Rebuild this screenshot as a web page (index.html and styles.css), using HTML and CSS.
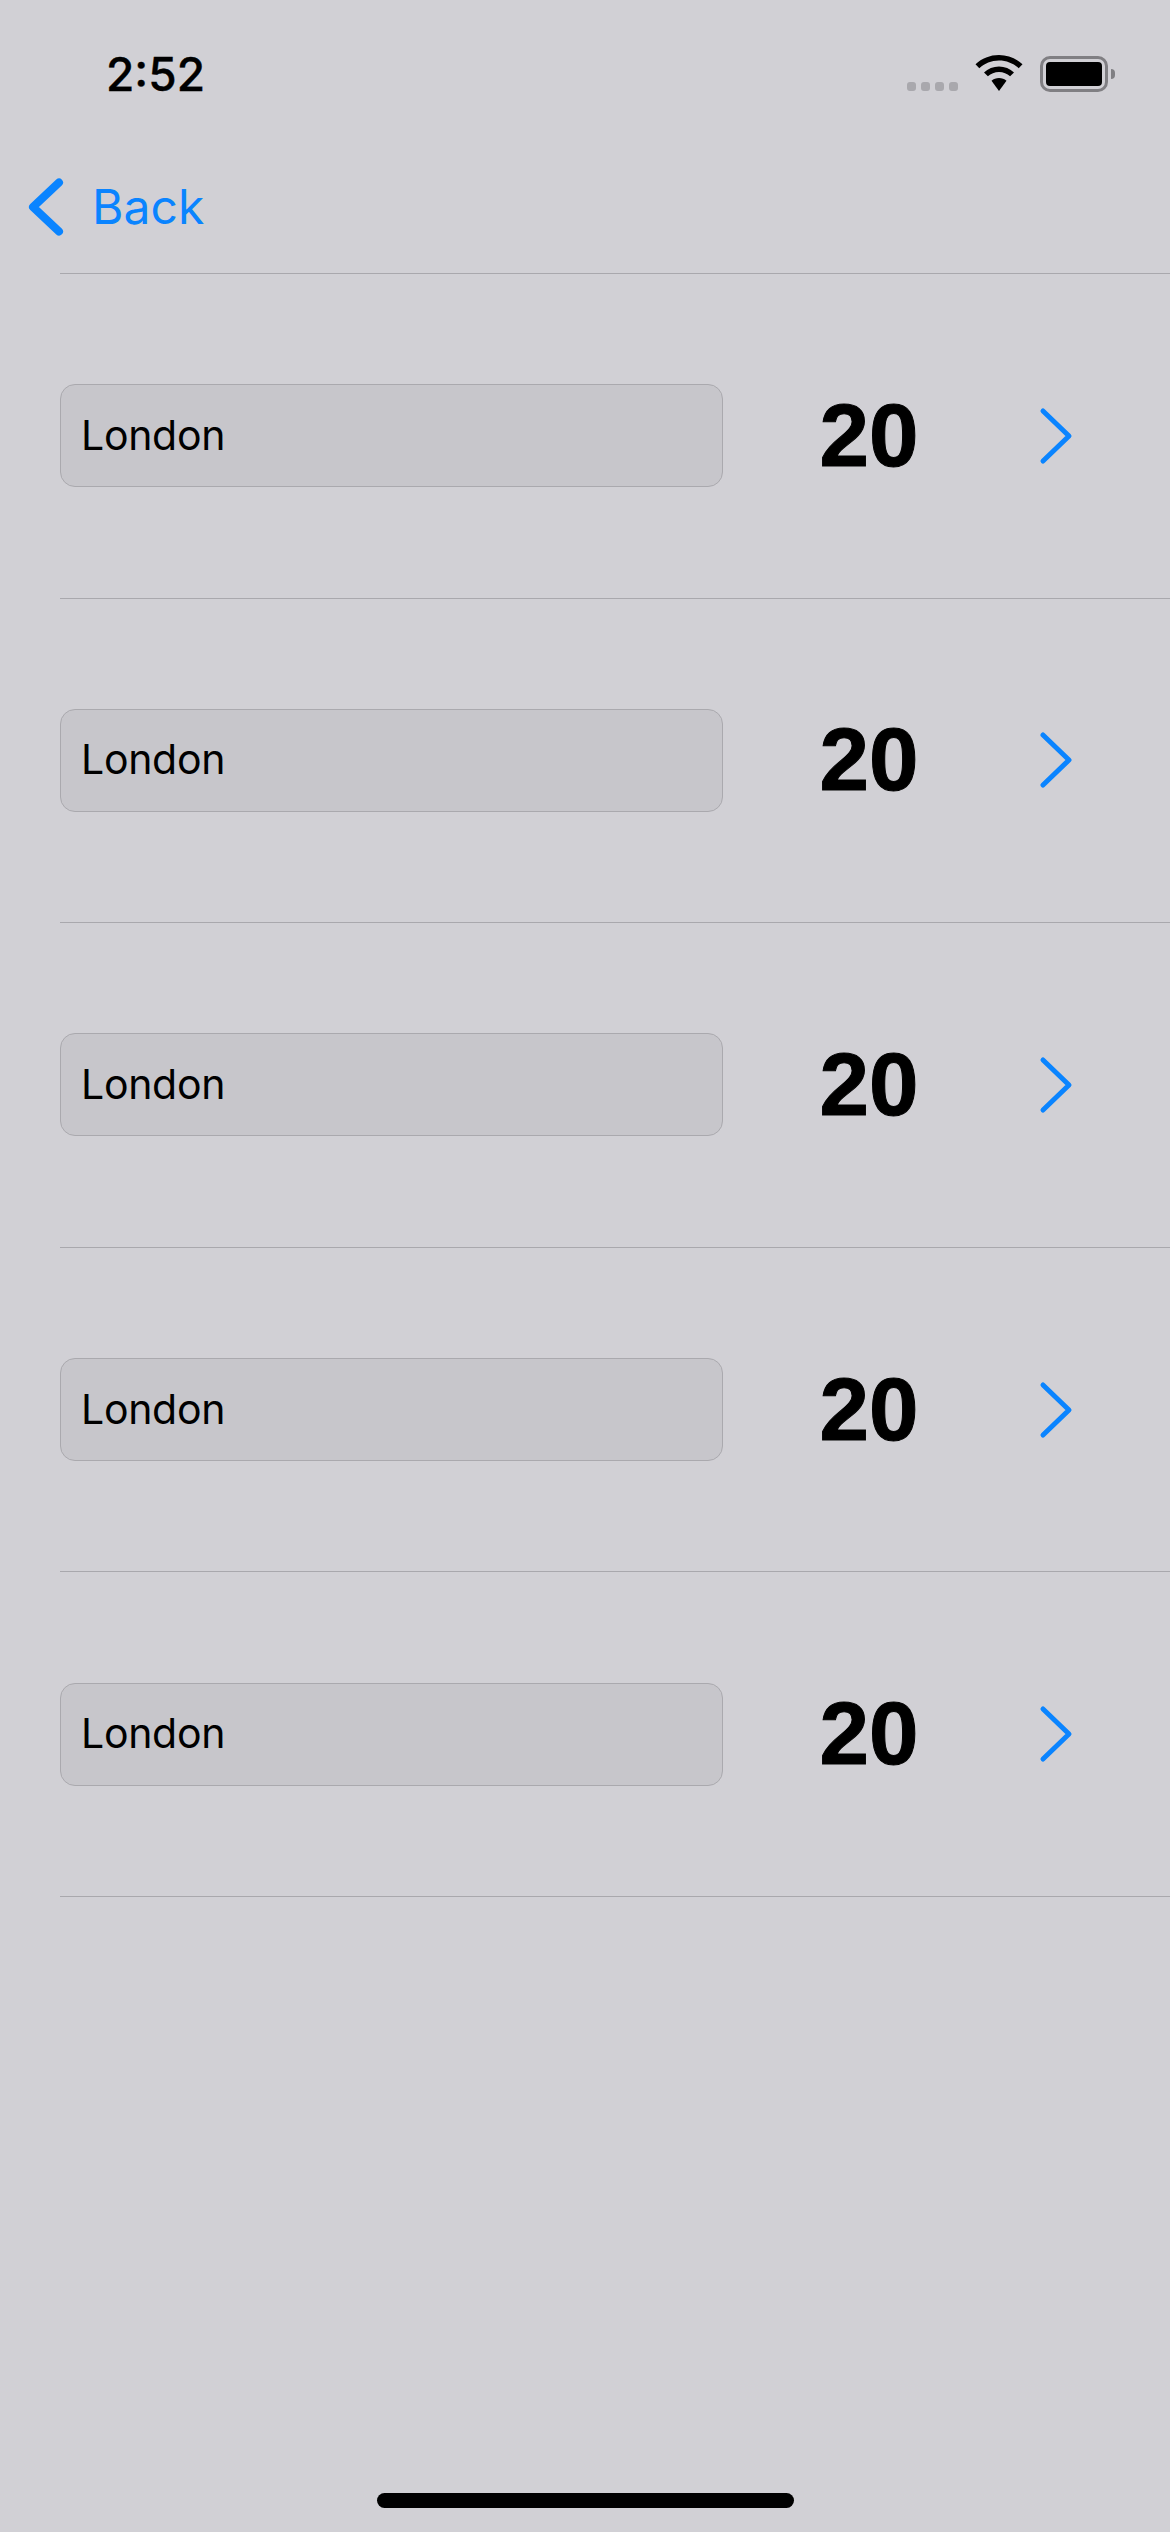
FILE: index.html
```html
<!DOCTYPE html>
<html lang="en">
<head>
<meta charset="utf-8">
<title>Cities</title>
<link rel="stylesheet" href="styles.css">
</head>
<body>
<div class="page">
  <header class="status">
    <span class="time">2:52</span>
    <div class="status-icons">
      <div class="signal"><i></i><i></i><i></i><i></i></div>
      <svg class="wifi" width="48" height="36" viewBox="0 0 48 36"><path d="M24 0C15 0 6.800 3.400 0.500 9.300L4.300 13.200C9.500 8.400 16.400 5.500 24 5.500C31.600 5.500 38.500 8.400 43.700 13.200L47.500 9.300C41.200 3.400 33 0 24 0Z"/><path d="M24 11.500C18.300 11.500 13 13.700 9 17.400L12.900 21.300C15.900 18.700 19.700 17.100 24 17.100C28.300 17.100 32.100 18.700 35.100 21.300L39 17.400C35 13.700 29.700 11.500 24 11.500Z"/><path d="M24 23C21.200 23 18.500 24 16.500 25.800L24 36L31.500 25.800C29.500 24 26.800 23 24 23Z"/></svg>
      <div class="battery"><div class="battery-body"><div class="battery-fill"></div></div><div class="battery-cap"></div></div>
    </div>
  </header>
  <nav class="nav">
    <svg class="back-chevron" width="36" height="60" viewBox="0 0 36 60"><path d="M31 5.500L5 30L31 54.500"/></svg>
    <span class="back-label">Back</span>
  </nav>
  <main class="list">
    <div class="row">
      <div class="field">London</div>
      <div class="count">20</div>
      <svg class="chevron" width="36" height="60" viewBox="0 0 36 60"><path d="M5 5L31 30L5 55"/></svg>
    </div>
    <div class="row">
      <div class="field">London</div>
      <div class="count">20</div>
      <svg class="chevron" width="36" height="60" viewBox="0 0 36 60"><path d="M5 5L31 30L5 55"/></svg>
    </div>
    <div class="row">
      <div class="field">London</div>
      <div class="count">20</div>
      <svg class="chevron" width="36" height="60" viewBox="0 0 36 60"><path d="M5 5L31 30L5 55"/></svg>
    </div>
    <div class="row">
      <div class="field">London</div>
      <div class="count">20</div>
      <svg class="chevron" width="36" height="60" viewBox="0 0 36 60"><path d="M5 5L31 30L5 55"/></svg>
    </div>
    <div class="row">
      <div class="field">London</div>
      <div class="count">20</div>
      <svg class="chevron" width="36" height="60" viewBox="0 0 36 60"><path d="M5 5L31 30L5 55"/></svg>
    </div>
  </main>
  <div class="home-bar"></div>
</div>
</body>
</html>
```
FILE: styles.css
```css
* { box-sizing: border-box; }
html, body { margin: 0; padding: 0; }
body { background: #d1d0d5; font-family: Inter, "Liberation Sans", sans-serif; color: #000; }
.page { width: 1170px; height: 2532px; display: flex; flex-direction: column; overflow: hidden; }

.status { height: 150px; flex: none; display: flex; justify-content: space-between; align-items: flex-start; padding: 46px 55px 0 106px; }
.time { font-size: 46px; font-weight: 500; line-height: 57px; -webkit-text-stroke: 0.4px #000; }
.status-icons { display: flex; align-items: flex-start; padding-top: 9px; }
.signal { display: flex; gap: 5px; margin-top: 27px; margin-right: 17px; }
.signal i { width: 9px; height: 9px; border-radius: 3px; background: #a9a8ad; display: block; }
.wifi { fill: #000; display: block; margin-right: 17px; }
.battery { display: flex; align-items: center; margin-top: 1px; }
.battery-body { width: 68px; height: 36px; border: 3px solid #807f83; border-radius: 10px; padding: 3px; }
.battery-fill { width: 100%; height: 100%; background: #000; border-radius: 4px; }
.battery-cap { width: 4px; height: 10px; margin-left: 3px; background: #807f83; border-radius: 0 5px 5px 0; }

.nav { height: 123px; flex: none; display: flex; align-items: center; padding-left: 28px; padding-bottom: 10px; }
.back-chevron { display: block; fill: none; stroke: #0a84ff; stroke-width: 8; stroke-linecap: round; stroke-linejoin: round; }
.back-label { margin-left: 28px; color: #0a84ff; font-size: 48px; letter-spacing: 0.1px; font-weight: 400; line-height: 60px; }

.list { margin-left: 60px; border-top: 1px solid #a9a8ad; flex: none; }
.row { height: 324.6px; display: grid; grid-template-columns: 663px 290px 36px; align-items: center; border-bottom: 1px solid #a9a8ad; }
.field { height: 103px; display: flex; align-items: center; padding: 0 0 2px 20px; background: #c7c6cb; border: 1px solid #aaa9ae; border-radius: 15px; font-size: 41px; letter-spacing: -0.3px; }
.count { text-align: center; padding: 0 0 2px 2px; font-family: "Liberation Sans", Arial, sans-serif; font-weight: 700; font-size: 89px; line-height: 98px; -webkit-text-stroke: 1px #000; }
.chevron { display: block; margin-left: 25px; fill: none; stroke: #0a84ff; stroke-width: 5; stroke-linecap: round; stroke-linejoin: round; }

.home-bar { margin-top: auto; margin-bottom: 24px; align-self: center; width: 417px; height: 15px; background: #000; border-radius: 8px; }
```
